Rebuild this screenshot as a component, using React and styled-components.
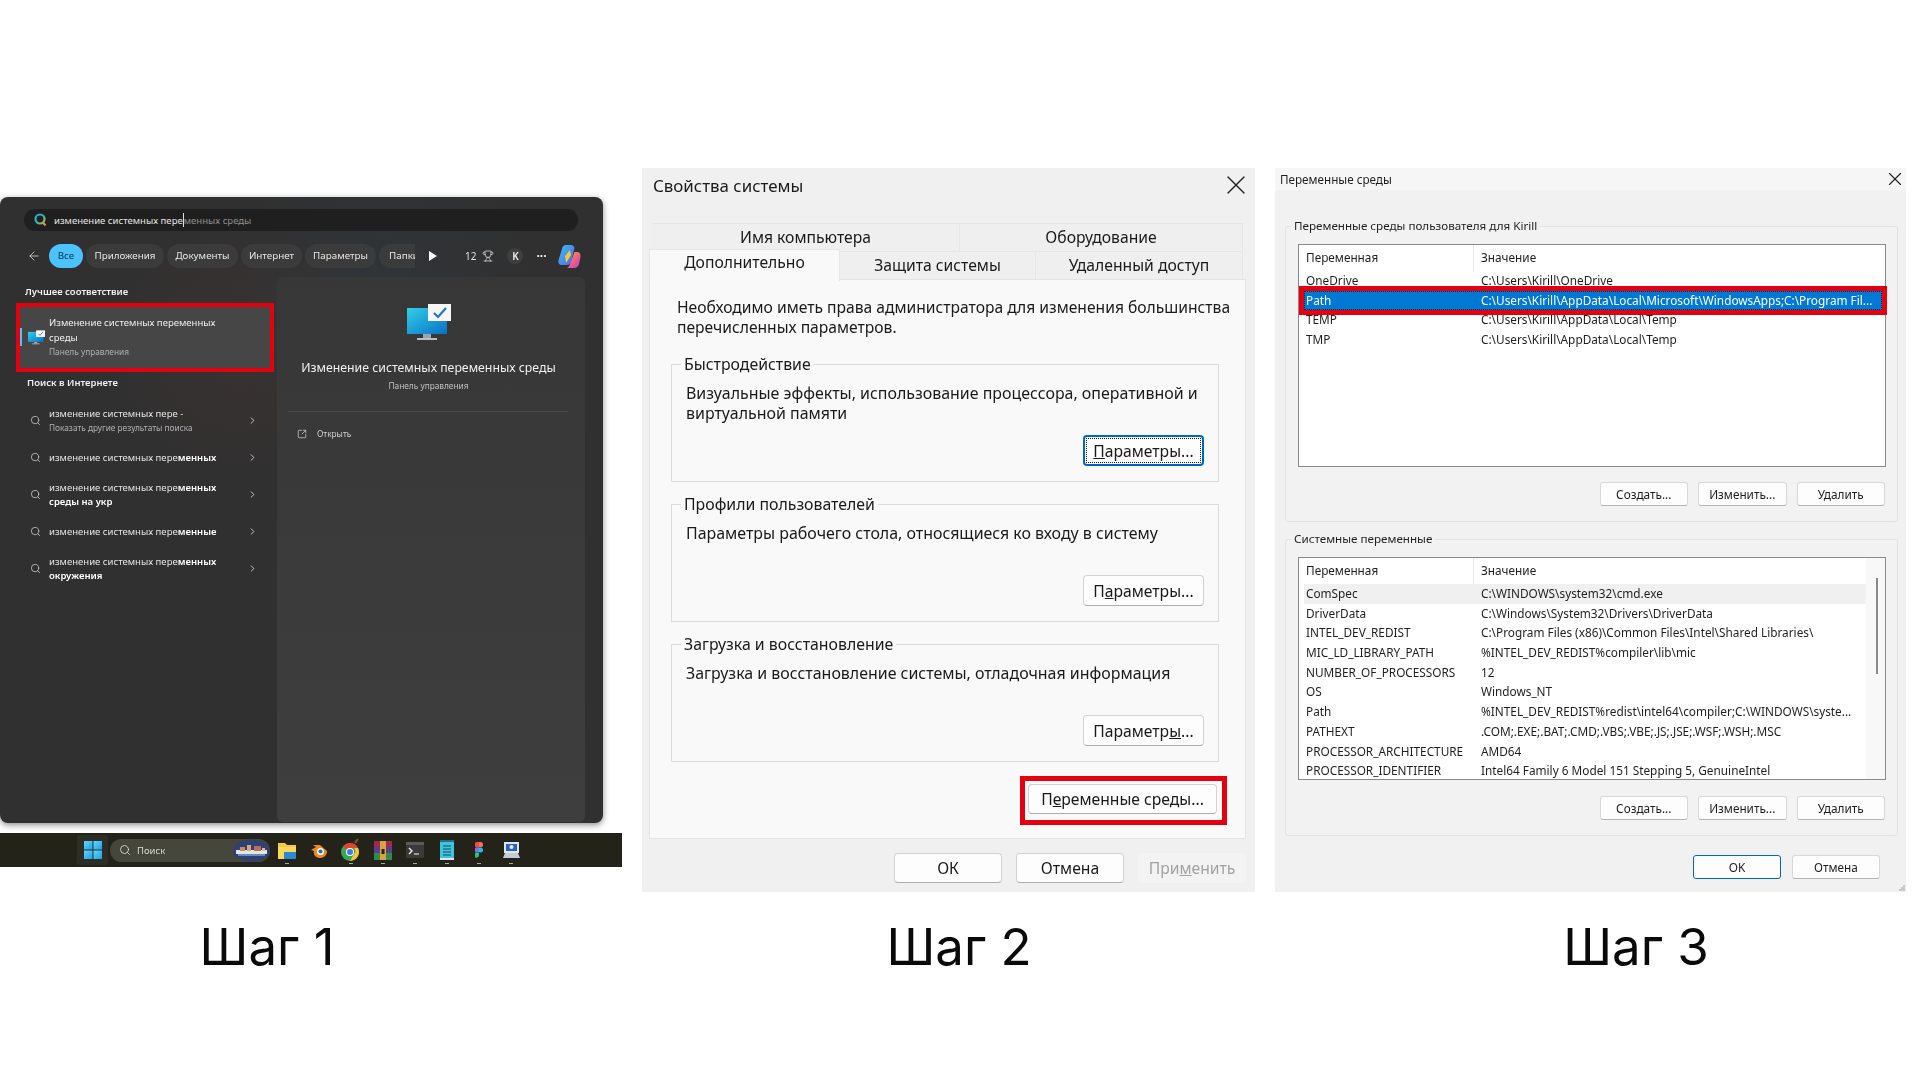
import React from 'react'
import styled, { createGlobalStyle } from 'styled-components'
import { ArrowLeft, ChevronRight, Search, SquareArrowOutUpRight, Trophy, X } from 'lucide-react'

const GlobalStyle = createGlobalStyle`
    html, body {
        margin: 0;
        background: #fff;
    }
    * {
        box-sizing: border-box;
    }
`

const userRows = [
    ['OneDrive', 'C:\\Users\\Kirill\\OneDrive'],
    ['Path', 'C:\\Users\\Kirill\\AppData\\Local\\Microsoft\\WindowsApps;C:\\Program Fil...'],
    ['TEMP', 'C:\\Users\\Kirill\\AppData\\Local\\Temp'],
    ['TMP', 'C:\\Users\\Kirill\\AppData\\Local\\Temp'],
]

const systemRows = [
    ['ComSpec', 'C:\\WINDOWS\\system32\\cmd.exe'],
    ['DriverData', 'C:\\Windows\\System32\\Drivers\\DriverData'],
    ['INTEL_DEV_REDIST', 'C:\\Program Files (x86)\\Common Files\\Intel\\Shared Libraries\\'],
    ['MIC_LD_LIBRARY_PATH', '%INTEL_DEV_REDIST%compiler\\lib\\mic'],
    ['NUMBER_OF_PROCESSORS', '12'],
    ['OS', 'Windows_NT'],
    ['Path', '%INTEL_DEV_REDIST%redist\\intel64\\compiler;C:\\WINDOWS\\syste...'],
    ['PATHEXT', '.COM;.EXE;.BAT;.CMD;.VBS;.VBE;.JS;.JSE;.WSF;.WSH;.MSC'],
    ['PROCESSOR_ARCHITECTURE', 'AMD64'],
    ['PROCESSOR_IDENTIFIER', 'Intel64 Family 6 Model 151 Stepping 5, GenuineIntel'],
]

function MonitorIcon({ width, height }) {
    return (
        <svg width={width} height={height} viewBox="0 0 44 37">
            <defs>
                <linearGradient id="screen" x1="0" y1="0" x2="1" y2="1">
                    <stop offset="0" stopColor="#2fd0e6" />
                    <stop offset="1" stopColor="#0a70c8" />
                </linearGradient>
            </defs>
            <rect x="16" y="30" width="8" height="4" fill="#9aa5ad" />
            <rect x="10" y="34" width="20" height="2" fill="#b7bfc5" />
            <rect x="0" y="4" width="40" height="26" fill="url(#screen)" />
            <rect x="21" y="0" width="23" height="17" fill="#f7f7f7" />
            <path d="M27 9l4 4 8-9" fill="none" stroke="#1f78c8" strokeWidth="2.2" />
        </svg>
    )
}

function BingGlass() {
    return (
        <svg width="13" height="14" viewBox="0 0 13 14">
            <defs>
                <linearGradient id="glass" x1="0" y1="0" x2="1" y2="1">
                    <stop offset="0" stopColor="#2f9fe0" />
                    <stop offset="0.6" stopColor="#2fc4a8" />
                    <stop offset="1" stopColor="#e8a23c" />
                </linearGradient>
            </defs>
            <circle cx="6" cy="6" r="4.500" fill="none" stroke="url(#glass)" strokeWidth="2.200" />
            <path d="M9 9.500l2.500 3" stroke="#e8903c" strokeWidth="2" />
        </svg>
    )
}

function Copilot() {
    return (
        <svg width="23" height="25" viewBox="0 0 23 25">
            <defs>
                <linearGradient id="copA" x1="0" y1="0" x2="1" y2="1">
                    <stop offset="0" stopColor="#36c6f0" />
                    <stop offset="1" stopColor="#5a5be8" />
                </linearGradient>
                <linearGradient id="copB" x1="0" y1="0" x2="1" y2="1">
                    <stop offset="0" stopColor="#f5b52c" />
                    <stop offset="0.6" stopColor="#e8588c" />
                    <stop offset="1" stopColor="#b04be0" />
                </linearGradient>
            </defs>
            <path d="M8 1h5c2 0 3 1 3.500 3L13 18c-.5 2-2 3-4 3H4c-3 0-4-2-3.500-5L4 5c.6-2.500 2-4 4-4z" fill="url(#copA)" />
            <path d="M10 24h6c3 0 4.500-2 5-4l1.500-7c.5-3-1-5-3-5h-3L12 20c-.5 2-1.500 3-3 4z" fill="url(#copB)" />
            <path d="M7 12l5-6 1 5-5 8z" fill="#f0c93a" />
        </svg>
    )
}

function StartLogo() {
    return (
        <svg width="18" height="18" viewBox="0 0 18 18">
            <defs>
                <linearGradient id="winTile" x1="0" y1="0" x2="1" y2="1">
                    <stop offset="0" stopColor="#5fd7fb" />
                    <stop offset="1" stopColor="#1f9fe8" />
                </linearGradient>
            </defs>
            <rect width="8.500" height="8.500" fill="url(#winTile)" />
            <rect x="9.500" width="8.500" height="8.500" fill="url(#winTile)" />
            <rect y="9.500" width="8.500" height="8.500" fill="url(#winTile)" />
            <rect x="9.500" y="9.500" width="8.500" height="8.500" fill="url(#winTile)" />
        </svg>
    )
}

function Skyline() {
    return (
        <svg width="37" height="23" viewBox="0 0 37 23">
            <ellipse cx="18.500" cy="11.500" rx="18.500" ry="11" fill="#30406f" />
            <rect x="3" y="11" width="31" height="4" fill="#e8e4e0" />
            <rect x="7" y="8" width="5" height="4" fill="#c98a68" />
            <rect x="14" y="6" width="4" height="6" fill="#d9a582" />
            <rect x="21" y="7" width="7" height="5" fill="#b8705c" />
            <rect x="29" y="9" width="3" height="3" fill="#e0b89c" />
            <rect x="5" y="15" width="27" height="2" fill="#5f8ec4" />
        </svg>
    )
}

function FolderIcon() {
    return (
        <svg width="18" height="17" viewBox="0 0 18 17">
            <path d="M0 1h7l2 2h9v14H0z" fill="#f6c93f" />
            <rect y="5" width="18" height="12" fill="#fbd75b" />
            <rect x="6" y="10" width="12" height="7" fill="#2a8ad4" />
        </svg>
    )
}

function BlenderIcon() {
    return (
        <svg width="18" height="16" viewBox="0 0 18 16">
            <path d="M1 8l5-3-3-2h7l7 6c0 4-3 7-7 7S3 13 4 9z" fill="#ee8a20" />
            <circle cx="10.500" cy="9.500" r="3.500" fill="#fff" />
            <circle cx="10.500" cy="9.500" r="2" fill="#2a6fb0" />
        </svg>
    )
}

function ChromeIcon() {
    return (
        <svg width="20" height="24" viewBox="0 0 20 24">
            <path d="M14 5c1-2 2-3 3-4" stroke="#7a5a2c" strokeWidth="2" fill="none" />
            <circle cx="9" cy="14" r="9" fill="#3aa757" />
            <path d="M9 5a9 9 0 0 1 8 5H9a4 4 0 0 0-4 2L2.500 8A9 9 0 0 1 9 5z" fill="#e3432f" />
            <path d="M17 10a9 9 0 0 1-8 13l4-7a4 4 0 0 0 0-6z" fill="#f6c33b" />
            <circle cx="9" cy="14" r="4" fill="#fff" />
            <circle cx="9" cy="14" r="3" fill="#3b7de0" />
        </svg>
    )
}

function RarIcon() {
    return (
        <svg width="18" height="19" viewBox="0 0 18 19">
            <rect y="0" width="18" height="6" fill="#a3284e" />
            <rect y="6" width="18" height="6" fill="#5a3f8e" />
            <rect y="12" width="18" height="7" fill="#2f8a4e" />
            <rect x="6" y="0" width="6" height="19" fill="#d9a23f" />
            <rect x="7.500" y="8" width="3" height="5" fill="#2b2210" />
        </svg>
    )
}

function TerminalIcon() {
    return (
        <svg width="18" height="16" viewBox="0 0 18 16">
            <rect width="18" height="16" rx="1" fill="#3a3a38" />
            <rect width="18" height="3" fill="#5a5a56" />
            <path d="M3 6l3 3-3 3" fill="none" stroke="#eee" strokeWidth="1.400" />
            <path d="M8 12h5" stroke="#ddd" strokeWidth="1.200" />
        </svg>
    )
}

function NotepadIcon() {
    return (
        <svg width="14" height="20" viewBox="0 0 14 20">
            <rect width="14" height="20" rx="1" fill="#40c4dc" />
            <rect width="14" height="2" fill="#1e6f90" />
            <path d="M3 6h8M3 9h8M3 12h8M3 15h8" stroke="#0d4a68" strokeWidth="1" />
            <rect y="18" width="14" height="2" fill="#dfe6ea" />
        </svg>
    )
}

function FigmaIcon() {
    return (
        <svg width="8" height="16" viewBox="0 0 8 16">
            <path d="M4 0H2a2.500 2.500 0 0 0 0 5.300h2z" fill="#e8503a" />
            <path d="M4 0h1.500a2.500 2.500 0 0 1 0 5.300H4z" fill="#f27162" />
            <path d="M4 5.300H2a2.500 2.500 0 0 0 0 5.300h2z" fill="#9b5ce6" />
            <circle cx="5.500" cy="8" r="2.500" fill="#2fb4ec" />
            <path d="M2 10.700h2v2.600a2.500 2.500 0 1 1-2-2.600z" fill="#20c97a" />
        </svg>
    )
}

function PcIcon() {
    return (
        <svg width="17" height="18" viewBox="0 0 17 18">
            <rect x="1" y="1" width="15" height="11" fill="#dfe5ec" />
            <rect x="3" y="3" width="11" height="7" fill="#2a62c0" />
            <path d="M2 12h13l2 5H0z" fill="#c3ccd6" />
            <circle cx="8.500" cy="6" r="2" fill="#e3eaf5" />
        </svg>
    )
}

function Grip() {
    return (
        <GripMark width="6" height="6" viewBox="0 0 6 6">
            <path d="M4 0h2v2H4zM2 2h2v2H2zM4 2h2v2H4zM0 4h2v2H0zM2 4h2v2H2zM4 4h2v2H4z" fill="#c8c8c8" />
        </GripMark>
    )
}

function VarTable({ rows, highlight, shaded }) {
    return (
        <>
            <HeadRow>
                <HeadCell>Переменная</HeadCell>
                <HeadCell>Значение</HeadCell>
            </HeadRow>
            {rows.map(([name, value], i) => (
                <VarRow key={name} $selected={i === highlight} $shaded={i === shaded}>
                    <span>{name}</span>
                    <span>{value}</span>
                </VarRow>
            ))}
        </>
    )
}

function SearchHit({ children, sub }) {
    return (
        <HitRow>
            <Search size={11} strokeWidth={1.6} color="#d6d6d6" />
            <HitText>
                {children}
                {sub && <HitSub>{sub}</HitSub>}
            </HitText>
            <ChevronRight size={11} strokeWidth={2} color="#cfcfcf" />
        </HitRow>
    )
}

function App() {
    return (
        <Page>
            <GlobalStyle />
            <Column $w={622}>
                <Shot $top={29}>
                    <StartPanel>
                        <SearchBox>
                            <BingGlass />
                            <SearchValue>
                                изменение системных пере<Caret />
                                <Ghost>менных среды</Ghost>
                            </SearchValue>
                        </SearchBox>
                        <FilterBar>
                            <ArrowLeft size={14} strokeWidth={1.3} color="#e4e4e4" />
                            <Pills>
                                <Pill $active $w={34}>Все</Pill>
                                <Pill $w={78}>Приложения</Pill>
                                <Pill $w={71}>Документы</Pill>
                                <Pill $w={61}>Интернет</Pill>
                                <Pill $w={71}>Параметры</Pill>
                                <Pill $w={50}>Папки</Pill>
                            </Pills>
                            <PlayMark />
                            <Points>12</Points>
                            <Trophy size={12} strokeWidth={1.5} color="#ddd" />
                            <Avatar>K</Avatar>
                            <Dots>···</Dots>
                            <Copilot />
                        </FilterBar>
                        <SearchBody>
                            <Results>
                                <SectionTitle>Лучшее соответствие</SectionTitle>
                                <BestCard>
                                    <AccentBar />
                                    <MonitorIcon width={17} height={15} />
                                    <BestText>
                                        Изменение системных переменных
                                        <br />
                                        среды
                                        <HitSub>Панель управления</HitSub>
                                    </BestText>
                                </BestCard>
                                <SectionTitle $web>Поиск в Интернете</SectionTitle>
                                <SearchHit sub="Показать другие результаты поиска">
                                    изменение системных пере -
                                </SearchHit>
                                <SearchHit>
                                    изменение системных пере<b>менных</b>
                                </SearchHit>
                                <SearchHit>
                                    изменение системных пере<b>менных</b>
                                    <br />
                                    <b>среды на укр</b>
                                </SearchHit>
                                <SearchHit>
                                    изменение системных пере<b>менные</b>
                                </SearchHit>
                                <SearchHit>
                                    изменение системных пере<b>менных</b>
                                    <br />
                                    <b>окружения</b>
                                </SearchHit>
                            </Results>
                            <Preview>
                                <MonitorIcon width={44} height={37} />
                                <PreviewTitle>Изменение системных переменных среды</PreviewTitle>
                                <PreviewSub>Панель управления</PreviewSub>
                                <PreviewRule />
                                <OpenAction>
                                    <SquareArrowOutUpRight size={10} strokeWidth={1.6} color="#e0e0e0" />
                                    Открыть
                                </OpenAction>
                            </Preview>
                        </SearchBody>
                    </StartPanel>
                    <Taskbar>
                        <StartTile>
                            <StartLogo />
                        </StartTile>
                        <TaskSearch>
                            <Search size={12} strokeWidth={1.6} color="#e6e6e0" />
                            <TaskSearchText>Поиск</TaskSearchText>
                            <Skyline />
                        </TaskSearch>
                        <TaskIcon $open><FolderIcon /></TaskIcon>
                        <TaskIcon><BlenderIcon /></TaskIcon>
                        <TaskIcon $open><ChromeIcon /></TaskIcon>
                        <TaskIcon $open><RarIcon /></TaskIcon>
                        <TaskIcon $open><TerminalIcon /></TaskIcon>
                        <TaskIcon $open><NotepadIcon /></TaskIcon>
                        <TaskIcon $open><FigmaIcon /></TaskIcon>
                        <TaskIcon $open><PcIcon /></TaskIcon>
                    </Taskbar>
                </Shot>
                <Caption $right={88}>Шаг 1</Caption>
            </Column>

            <Column $w={613} $gap={20}>
                <Shot>
                    <PropsDialog>
                        <PropsTitleBar>
                            Свойства системы
                            <X size={32} strokeWidth={1} color="#222" />
                        </PropsTitleBar>
                        <TabRow $left={10}>
                            <Tab $w={308}>Имя компьютера</Tab>
                            <Tab $w={283}>Оборудование</Tab>
                        </TabRow>
                        <TabRow $left={7}>
                            <ActiveTab $w={191}>Дополнительно</ActiveTab>
                            <Tab $w={196}>Защита системы</Tab>
                            <Tab $w={207}>Удаленный доступ</Tab>
                        </TabRow>
                        <TabPage>
                            <Intro>
                                Необходимо иметь права администратора для изменения большинства
                                <br />
                                перечисленных параметров.
                            </Intro>
                            <Groups>
                                <PropsGroup $h={128}>
                                    <PropsLegend>Быстродействие</PropsLegend>
                                    <GroupText>
                                        Визуальные эффекты, использование процессора, оперативной и
                                        <br />
                                        виртуальной памяти
                                    </GroupText>
                                    <PropsButton $focus>
                                        <u>П</u>араметры...
                                    </PropsButton>
                                </PropsGroup>
                                <PropsGroup $h={128}>
                                    <PropsLegend>Профили пользователей</PropsLegend>
                                    <GroupText>Параметры рабочего стола, относящиеся ко входу в систему</GroupText>
                                    <PropsButton>
                                        П<u>а</u>раметры...
                                    </PropsButton>
                                </PropsGroup>
                                <PropsGroup $h={128}>
                                    <PropsLegend>Загрузка и восстановление</PropsLegend>
                                    <GroupText>Загрузка и восстановление системы, отладочная информация</GroupText>
                                    <PropsButton>
                                        Параметр<u>ы</u>...
                                    </PropsButton>
                                </PropsGroup>
                            </Groups>
                            <EnvFrame>
                                <EnvButton>
                                    П<u>е</u>ременные среды...
                                </EnvButton>
                            </EnvFrame>
                        </TabPage>
                        <PropsFooter>
                            <FooterButton>ОК</FooterButton>
                            <FooterButton>Отмена</FooterButton>
                            <FooterButton $disabled>
                                При<u>м</u>енить
                            </FooterButton>
                        </PropsFooter>
                    </PropsDialog>
                </Shot>
                <Caption $left={21}>Шаг 2</Caption>
            </Column>

            <Column $w={631} $gap={20}>
                <Shot>
                    <EnvDialog>
                        <EnvTitleBar>
                            Переменные среды
                            <X size={22} strokeWidth={1.2} color="#222" />
                        </EnvTitleBar>
                        <EnvGroup>
                            <EnvLegend>Переменные среды пользователя для Kirill</EnvLegend>
                            <VarList>
                                <VarRows $w={578}>
                                    <VarTable rows={userRows} highlight={1} />
                                </VarRows>
                            </VarList>
                            <SmallButtons $top={15}>
                                <SmallButton>Создать...</SmallButton>
                                <SmallButton>Изменить...</SmallButton>
                                <SmallButton>Удалить</SmallButton>
                            </SmallButtons>
                        </EnvGroup>
                        <EnvGroup>
                            <EnvLegend>Системные переменные</EnvLegend>
                            <VarList $scroll>
                                <VarRows $w={562}>
                                    <VarTable rows={systemRows} shaded={0} />
                                </VarRows>
                                <ScrollTrack>
                                    <ScrollThumb />
                                </ScrollTrack>
                            </VarList>
                            <SmallButtons $top={16}>
                                <SmallButton>Создать...</SmallButton>
                                <SmallButton>Изменить...</SmallButton>
                                <SmallButton>Удалить</SmallButton>
                            </SmallButtons>
                        </EnvGroup>
                        <EnvFooter>
                            <FooterSmall $primary>OK</FooterSmall>
                            <FooterSmall>Отмена</FooterSmall>
                        </EnvFooter>
                        <Grip />
                    </EnvDialog>
                </Shot>
                <Caption $left={91}>Шаг 3</Caption>
            </Column>
        </Page>
    )
}

const Page = styled.div`
    display: flex;
    width: 1920px;
    height: 1080px;
    padding-top: 168px;
    overflow: hidden;
    background: #fff;
    font-family: "Noto Sans", "Open Sans", sans-serif;
`

const Column = styled.div`
    flex: none;
    width: ${(p) => p.$w}px;
    margin-left: ${(p) => p.$gap || 0}px;
`

const Shot = styled.div`
    height: 724px;
    padding-top: ${(p) => p.$top || 0}px;
`

const Caption = styled.div`
    margin-top: 30px;
    padding-left: ${(p) => p.$left || 0}px;
    padding-right: ${(p) => p.$right || 0}px;
    text-align: center;
    font-family: Inter, sans-serif;
    font-size: 51px;
    line-height: 50px;
    color: #0a0a0a;
`

const StartPanel = styled.div`
    width: 603px;
    height: 626px;
    padding-top: 12px;
    border-radius: 8px;
    color: #f0f0f0;
    font-size: 10px;
    box-shadow: 0 2px 6px rgba(0, 0, 0, 0.45);
    background:
        radial-gradient(circle at 240px 150px, rgba(120, 60, 50, 0.12), transparent 140px),
        radial-gradient(circle at 380px 100px, rgba(50, 80, 110, 0.14), transparent 160px),
        #303030;
    filter: blur(0.3px);
`

const SearchBox = styled.div`
    display: flex;
    align-items: center;
    gap: 7px;
    width: 554px;
    height: 22px;
    margin-left: 24px;
    padding-left: 10px;
    border-radius: 11px;
    background: #1f1f1f;
`

const SearchValue = styled.div`
    font-size: 9.550px;
    color: #e4e4e4;
    white-space: nowrap;
`

const Caret = styled.span`
    display: inline-block;
    width: 1px;
    height: 14px;
    margin-bottom: -3px;
    background: #ddd;
`

const Ghost = styled.span`
    color: #8e8e8e;
`

const FilterBar = styled.div`
    display: flex;
    align-items: center;
    height: 24px;
    margin-top: 13px;
    padding-left: 27px;
`

const Pills = styled.div`
    display: flex;
    gap: 3px;
    width: 366px;
    margin-left: 8px;
    overflow: hidden;
`

const Pill = styled.div`
    flex: none;
    width: ${(p) => p.$w}px;
    height: 24px;
    border-radius: 12px;
    font-size: 9.800px;
    line-height: 24px;
    text-align: center;
    color: ${(p) => (p.$active ? '#10303f' : '#e6e6e6')};
    background: ${(p) => (p.$active ? '#4cc2ff' : '#3b3b3b')};
`

const PlayMark = styled.div`
    width: 0;
    height: 0;
    margin-left: 14px;
    border-left: 8px solid #fff;
    border-top: 5px solid transparent;
    border-bottom: 5px solid transparent;
`

const Points = styled.div`
    margin-left: 28px;
    margin-right: 6px;
    font-size: 10px;
    color: #e0e0e0;
`

const Avatar = styled.div`
    width: 16px;
    height: 16px;
    margin-left: 13px;
    border-radius: 50%;
    background: #3e3e3e;
    font-size: 10px;
    font-weight: 600;
    line-height: 16px;
    text-align: center;
`

const Dots = styled.div`
    width: 10px;
    margin-left: 13px;
    margin-right: 12px;
    font-size: 12px;
    font-weight: 700;
    line-height: 12px;
`

const SearchBody = styled.div`
    display: flex;
    margin-top: 9px;
`

const Results = styled.div`
    width: 277px;
`

const SectionTitle = styled.div`
    height: 14px;
    margin-top: 8px;
    margin-bottom: ${(p) => (p.$web ? 12 : 8)}px;
    padding-left: ${(p) => (p.$web ? 27 : 25)}px;
    font-size: 9.500px;
    font-weight: 600;
    line-height: 14px;
`

const BestCard = styled.div`
    position: relative;
    display: flex;
    align-items: center;
    gap: 4px;
    width: 250px;
    height: 61px;
    margin-left: 20px;
    padding-left: 8px;
    background: #464646;
    outline: 4.5px solid #e3000f;
`

const AccentBar = styled.span`
    position: absolute;
    left: 0;
    top: 21px;
    width: 2px;
    height: 18px;
    background: #4cc2ff;
`

const BestText = styled.div`
    padding-top: 1px;
    font-size: 9.550px;
    line-height: 14.700px;
    color: #efefef;
`

const HitRow = styled.div`
    display: flex;
    align-items: center;
    width: 258px;
    height: 37px;
    padding-left: 30px;
`

const HitText = styled.div`
    flex: 1;
    padding: 1px 0 0 8px;
    font-size: 9.550px;
    line-height: 14.500px;
    color: #e4e4e4;

    b {
        font-weight: 600;
        color: #fff;
    }
`

const HitSub = styled.div`
    font-size: 8.300px;
    font-weight: 400;
    color: #b0b0b0;
`

const Preview = styled.div`
    display: flex;
    flex-direction: column;
    align-items: center;
    width: 308px;
    height: 545px;
    padding: 27px 5px 0 0;
    border-radius: 6px;
    background: linear-gradient(#373737, #3e3e3e);
`

const PreviewTitle = styled.div`
    margin-top: 18px;
    font-size: 12.300px;
    line-height: 18px;
    color: #f0f0f0;
    white-space: nowrap;
`

const PreviewSub = styled.div`
    margin-top: 3px;
    font-size: 8.300px;
    line-height: 12px;
    color: #c0c0c0;
`

const PreviewRule = styled.div`
    align-self: flex-start;
    width: 280px;
    height: 1px;
    margin: 19px 0 0 11px;
    background: #4c4c4c;
`

const OpenAction = styled.div`
    display: flex;
    align-items: center;
    align-self: flex-start;
    gap: 10px;
    margin: 16px 0 0 20px;
    font-size: 8.300px;
    line-height: 12px;
    color: #d0d0d0;
`

const Taskbar = styled.div`
    display: flex;
    align-items: center;
    width: 622px;
    height: 34px;
    margin-top: 10px;
    padding-left: 77px;
    background: #23231a;
    filter: blur(0.3px);
`

const StartTile = styled.div`
    display: flex;
    align-items: center;
    justify-content: center;
    width: 31px;
    height: 30px;
    border-radius: 3px;
    background: #2e2d25;
`

const TaskSearch = styled.div`
    display: flex;
    align-items: center;
    width: 160px;
    height: 23px;
    margin: 0 1px 0 2px;
    padding-left: 9px;
    border-radius: 12px;
    background: #45463c;
`

const TaskSearchText = styled.span`
    flex: 1;
    margin-left: 6px;
    font-size: 9.500px;
    color: #d8d8d0;
`

const TaskIcon = styled.div`
    position: relative;
    display: flex;
    align-items: center;
    justify-content: center;
    width: 32px;
    height: 34px;

    &::after {
        content: '';
        position: absolute;
        bottom: 3px;
        left: 14px;
        display: ${(p) => (p.$open ? 'block' : 'none')};
        width: 4px;
        height: 1.500px;
        background: #a8a8a0;
    }
`

const PropsDialog = styled.div`
    height: 724px;
    background: #f0f0f0;
    color: #1a1a1a;
    font-size: 15.700px;
    filter: blur(0.25px);
`

const PropsTitleBar = styled.div`
    display: flex;
    align-items: center;
    justify-content: space-between;
    height: 34px;
    margin-bottom: 21px;
    padding: 0 3px 0 11px;
    font-size: 16.900px;
`

const TabRow = styled.div`
    position: relative;
    display: flex;
    margin-left: ${(p) => p.$left}px;
`

const Tab = styled.div`
    width: ${(p) => p.$w}px;
    height: 28px;
    border: 1px solid #e6e6e6;
    border-left: 0;
    border-bottom: 0;
    background: #efefef;
    line-height: 26px;
    text-align: center;
`

const ActiveTab = styled(Tab)`
    height: 32px;
    margin-top: -2px;
    margin-bottom: -2px;
    border-left: 1px solid #e6e6e6;
    background: #f9f9f9;
    position: relative;
    z-index: 1;
    line-height: 25px;
`

const TabPage = styled.div`
    display: flex;
    flex-direction: column;
    width: 597px;
    height: 560px;
    margin-left: 7px;
    padding: 18px 0 0 0;
    border: 1px solid #e4e4e4;
    background: #f9f9f9;
`

const Intro = styled.div`
    margin-left: 27px;
    font-size: 15.650px;
    line-height: 19.500px;
    white-space: nowrap;
`

const Groups = styled.div`
    display: flex;
    flex-direction: column;
    gap: 12px;
    margin: 17px 0 0 21px;
`

const PropsGroup = styled.fieldset`
    width: 548px;
    height: ${(p) => p.$h}px;
    min-width: 0;
    margin: 0;
    padding: 0 14px;
    border: 1px solid #dcdcdc;
`

const PropsLegend = styled.legend`
    height: 20px;
    margin-left: -5px;
    padding: 0 3px;
    font-size: 15.850px;
    line-height: 20px;
`

const GroupText = styled.div`
    min-height: 40px;
    margin-top: 9px;
    font-size: 15.950px;
    line-height: 20px;
    white-space: nowrap;
`

const PropsButton = styled.button`
    display: block;
    width: 121px;
    height: 31px;
    margin: 12px 0 0 auto;
    padding: 0;
    border: ${(p) => (p.$focus ? '2px solid #0067c0' : '1px solid #d2d2d2')};
    border-bottom-color: ${(p) => (p.$focus ? '#0067c0' : '#adadad')};
    border-radius: 4px;
    background: #fdfdfd;
    color: #1a1a1a;
    font: inherit;
    outline: ${(p) => (p.$focus ? '1px dotted #222' : 'none')};
    outline-offset: -4px;
`

const EnvFrame = styled.div`
    width: 207px;
    height: 49px;
    margin: 14px 18px 0 auto;
    padding: 3px;
    border: 5px solid #e3000f;
`

const EnvButton = styled(PropsButton)`
    width: 189px;
    height: 30px;
    margin: 0;
`

const PropsFooter = styled.div`
    display: flex;
    justify-content: flex-end;
    gap: 14px;
    margin-top: 14px;
    padding-right: 9px;
`

const FooterButton = styled.div`
    width: 108px;
    height: 30px;
    border: 1px solid ${(p) => (p.$disabled ? '#f3f3f3' : '#d2d2d2')};
    border-bottom-color: ${(p) => (p.$disabled ? '#f3f3f3' : '#adadad')};
    border-radius: 4px;
    background: ${(p) => (p.$disabled ? '#f3f3f3' : '#fdfdfd')};
    color: ${(p) => (p.$disabled ? '#a2a2a2' : '#1a1a1a')};
    line-height: 28px;
    text-align: center;
`

const EnvDialog = styled.div`
    position: relative;
    height: 724px;
    background: #f1f1f1;
    color: #1f1f1f;
    font-size: 11.800px;
    filter: blur(0.2px);
`

const EnvTitleBar = styled.div`
    display: flex;
    align-items: center;
    justify-content: space-between;
    height: 22px;
    margin-bottom: 28px;
    padding-left: 5px;
    background: #f6f6f6;
    font-size: 11.700px;
`

const EnvGroup = styled.fieldset`
    min-width: 0;
    width: 613px;
    margin: 0 0 9px 10px;
    padding: 0 12px 15px;
    border: 1px solid #e2e2e2;
    border-radius: 3px;
    background: #f2f2f2;
`

const EnvLegend = styled.legend`
    height: 16px;
    margin-left: -7px;
    padding: 0 3px;
    font-size: 11.650px;
    line-height: 16px;
`

const VarList = styled.div`
    display: ${(p) => (p.$scroll ? 'flex' : 'block')};
    width: 588px;
    height: 223px;
    margin-top: 10px;
    border: 1px solid #8a8a8a;
    background: #fff;
    overflow: ${(p) => (p.$scroll ? 'hidden' : 'visible')};
`

const VarRows = styled.div`
    flex: none;
    width: ${(p) => p.$w}px;
    margin-left: 5px;
`

const HeadRow = styled.div`
    display: grid;
    grid-template-columns: 170px 1fr;
    column-gap: 5px;
    height: 26px;
    padding-left: 2px;
    line-height: 25px;
`

const HeadCell = styled.div`
    &:first-child {
        width: 168px;
        border-right: 1px solid #e8e8e8;
    }
`

const VarRow = styled.div`
    position: relative;
    display: grid;
    grid-template-columns: 170px 1fr;
    column-gap: 5px;
    height: 19.700px;
    padding-left: 2px;
    line-height: 19.700px;
    white-space: nowrap;
    background: ${(p) => (p.$selected ? '#0078d4' : p.$shaded ? '#f0f0f0' : 'transparent')};
    color: ${(p) => (p.$selected ? '#fff' : 'inherit')};
    outline: ${(p) => (p.$selected ? '5px solid #e3000f' : 'none')};
    z-index: ${(p) => (p.$selected ? 1 : 'auto')};

    &::after {
        content: '';
        display: ${(p) => (p.$selected ? 'block' : 'none')};
        position: absolute;
        inset: 0;
        border: 1px dotted #0b2a44;
    }
`

const ScrollTrack = styled.div`
    flex: 1;
    padding: 20px 0 0 10px;
    background: #f8f8f8;
`

const ScrollThumb = styled.div`
    width: 2px;
    height: 96px;
    background: #8a8a8a;
`

const SmallButtons = styled.div`
    display: flex;
    justify-content: flex-end;
    gap: 10px;
    margin-top: ${(p) => p.$top}px;
`

const SmallButton = styled.div`
    width: 88.500px;
    height: 24px;
    border: 1px solid #d8d8d8;
    border-bottom-color: #b4b4b4;
    border-radius: 3px;
    background: #fdfdfd;
    line-height: 22px;
    text-align: center;
`

const FooterSmall = styled(SmallButton)`
    width: 88px;
    border-color: ${(p) => (p.$primary ? '#0067c0' : '#d8d8d8')};
    border-bottom-color: ${(p) => (p.$primary ? '#0067c0' : '#b4b4b4')};
`

const EnvFooter = styled.div`
    display: flex;
    justify-content: flex-end;
    gap: 11px;
    margin-top: 19px;
    padding-right: 26px;
`

const GripMark = styled.svg`
    position: absolute;
    right: 1px;
    bottom: 1px;
`

export default App
